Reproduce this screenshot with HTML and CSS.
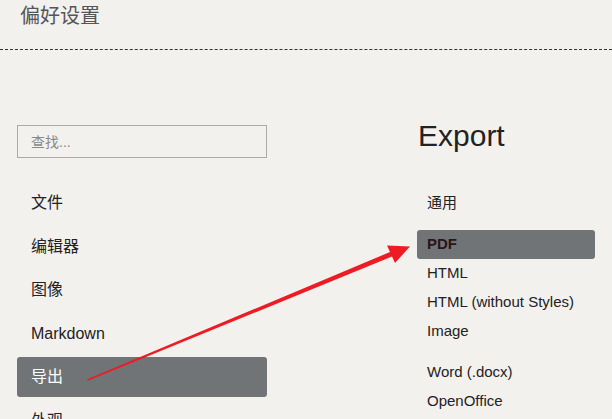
FILE: index.html
```html
<!DOCTYPE html>
<html lang="zh">
<head>
<meta charset="utf-8">
<title>偏好设置</title>
<link rel="stylesheet" href="styles.css">
</head>
<body>
<header class="header">
  <h1 class="title">偏好设置</h1>
</header>
<main class="main">
  <nav class="sidebar">
    <input class="search" type="text" placeholder="查找...">
    <ul class="menu">
      <li class="menu-item">文件</li>
      <li class="menu-item">编辑器</li>
      <li class="menu-item">图像</li>
      <li class="menu-item">Markdown</li>
      <li class="menu-item active">导出</li>
      <li class="menu-item">外观</li>
    </ul>
  </nav>
  <section class="panel">
    <h2 class="panel-title">Export</h2>
    <ul class="options">
      <li class="option">通用</li>
    </ul>
    <ul class="options group">
      <li class="option selected">PDF</li>
      <li class="option">HTML</li>
      <li class="option">HTML (without Styles)</li>
      <li class="option">Image</li>
    </ul>
    <ul class="options group">
      <li class="option">Word (.docx)</li>
      <li class="option">OpenOffice</li>
    </ul>
  </section>
</main>
<svg class="arrow" width="612" height="419" viewBox="0 0 612 419" aria-hidden="true">
  <polygon points="87.2,379.3 390,252 387,245.6 410,246.5 395,263 392,256.6 87.8,380.7" fill="#ed1c24"/>
</svg>
</body>
</html>
```

FILE: styles.css
```css
html, body {
  margin: 0;
  padding: 0;
}
body {
  background: #f3f1ee;
  font-family: "Liberation Sans", "Noto Sans CJK SC", sans-serif;
  color: #222;
  width: 612px;
  height: 419px;
  overflow: hidden;
  position: relative;
}
.header {
  border-bottom: 1px dashed #333;
  padding-left: 20px;
  box-sizing: border-box;
  height: 50px;
}
.title {
  margin: 0;
  padding-top: 1px;
  font-size: 20px;
  font-weight: normal;
  line-height: 28px;
  color: #555;
  font-family: "Noto Sans CJK SC", sans-serif;
}
.main {
  display: flex;
  padding-left: 17px;
}
.sidebar {
  width: 250px;
  padding-top: 75px;
}
.search {
  display: block;
  width: 250px;
  height: 33px;
  box-sizing: border-box;
  border: 1px solid #aaa;
  background: transparent;
  padding: 0 0 0 13px;
  margin: 0;
  font-size: 14px;
  font-family: "Liberation Sans", "Noto Sans CJK SC", sans-serif;
  color: #333;
  outline: none;
}
.search::placeholder {
  color: #888;
}
.menu {
  list-style: none;
  margin: 25px 0 0;
  padding: 0;
}
.menu-item {
  height: 40px;
  line-height: 40px;
  padding-left: 14px;
  margin-bottom: 3.6px;
  font-size: 16px;
  color: #222;
  border-radius: 3px;
}
.menu-item.active {
  background: #717477;
  color: #fff;
}
.panel {
  width: 178px;
  margin-left: 150px;
  padding-top: 71px;
}
.panel-title {
  margin: 0 0 0 1px;
  font-size: 30px;
  font-weight: normal;
  line-height: 30px;
  height: 30px;
  color: #222;
}
.options {
  list-style: none;
  margin: 37.5px 0 0;
  padding: 0;
}
.options.group {
  margin-top: 12px;
}
.option {
  height: 29px;
  line-height: 28px;
  padding-left: 10px;
  font-size: 15px;
  color: #222;
  border-radius: 3px;
}
.option.selected {
  background: #717477;
  font-weight: bold;
  color: #2a1515;
}
.arrow {
  position: absolute;
  left: 0;
  top: 0;
  pointer-events: none;
}
```
